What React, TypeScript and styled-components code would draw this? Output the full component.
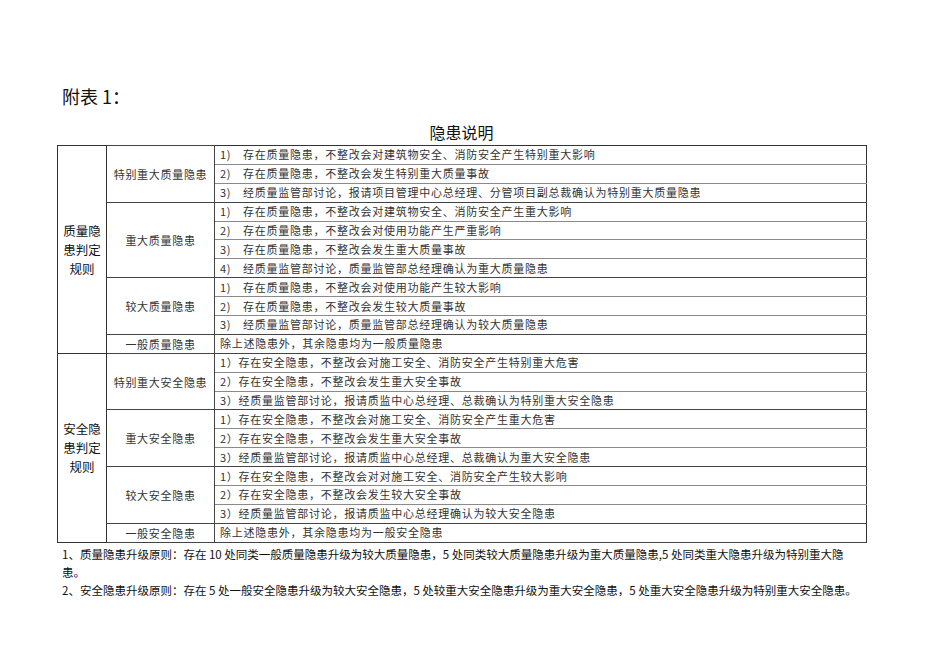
import styled, { createGlobalStyle } from 'styled-components'

const GlobalStyle = createGlobalStyle`
  html, body {
    margin: 0;
    padding: 0;
    background: #ffffff;
  }
  body {
    font-family: "Noto Sans CJK SC", "Noto Sans", sans-serif;
    color: #111111;
  }
`

const Page = styled.div`
  width: 950px;
  height: 672px;
  box-sizing: border-box;
  padding: 84px 0 0 57px;
`

const Heading = styled.div`
  font-size: 18px;
  line-height: 24px;
  padding-left: 5px;
  color: #111;
`

const Title = styled.div`
  width: 809px;
  text-align: center;
  font-size: 16px;
  line-height: 20px;
  margin-top: 14px;
  margin-bottom: 3px;
`

const Table = styled.table`
  width: 810px;
  border-collapse: collapse;
  table-layout: fixed;
  border: 1.5px solid #333;
`

const Row = styled.tr`
  height: 18.9px;
`

const GroupCell = styled.td`
  border: 1px solid #333;
  text-align: center;
  vertical-align: middle;
  font-size: 12.5px;
  line-height: 19px;
  padding: 0 4px;
  color: #111;
`

const LevelCell = styled.td`
  border: 1px solid #444;
  text-align: center;
  vertical-align: middle;
  font-size: 11px;
  letter-spacing: 0.7px;
  color: #333;
  padding: 0;
  white-space: nowrap;
`

const ItemCell = styled.td<{ $last?: boolean }>`
  border-left: 1px solid #444;
  border-right: 1px solid #333;
  border-bottom: 1px solid ${p => (p.$last ? '#444' : '#8a8a8a')};
  font-size: 11px;
  letter-spacing: 0.75px;
  line-height: 17px;
  color: #333;
  padding: 0 0 0 5px;
  white-space: nowrap;
  overflow: hidden;
`

const Notes = styled.div`
  width: 800px;
  font-size: 11.5px;
  line-height: 18px;
  padding: 2px 0 0 5px;
  box-sizing: border-box;
  color: #111;
`

type Level = { name: string; items: string[] }
type Group = { label: string[]; levels: Level[] }

const GROUPS: Group[] = [
  {
    label: ['质量隐', '患判定', '规则'],
    levels: [
      {
        name: '特别重大质量隐患',
        items: [
          '1)\u3000存在质量隐患，不整改会对建筑物安全、消防安全产生特别重大影响',
          '2)\u3000存在质量隐患，不整改会发生特别重大质量事故',
          '3)\u3000经质量监管部讨论，报请项目管理中心总经理、分管项目副总裁确认为特别重大质量隐患',
        ],
      },
      {
        name: '重大质量隐患',
        items: [
          '1)\u3000存在质量隐患，不整改会对建筑物安全、消防安全产生重大影响',
          '2)\u3000存在质量隐患，不整改会对使用功能产生严重影响',
          '3)\u3000存在质量隐患，不整改会发生重大质量事故',
          '4)\u3000经质量监管部讨论，质量监管部总经理确认为重大质量隐患',
        ],
      },
      {
        name: '较大质量隐患',
        items: [
          '1)\u3000存在质量隐患，不整改会对使用功能产生较大影响',
          '2)\u3000存在质量隐患，不整改会发生较大质量事故',
          '3)\u3000经质量监管部讨论，质量监管部总经理确认为较大质量隐患',
        ],
      },
      { name: '一般质量隐患', items: ['除上述隐患外，其余隐患均为一般质量隐患'] },
    ],
  },
  {
    label: ['安全隐', '患判定', '规则'],
    levels: [
      {
        name: '特别重大安全隐患',
        items: [
          '1）存在安全隐患，不整改会对施工安全、消防安全产生特别重大危害',
          '2）存在安全隐患，不整改会发生重大安全事故',
          '3）经质量监管部讨论，报请质监中心总经理、总裁确认为特别重大安全隐患',
        ],
      },
      {
        name: '重大安全隐患',
        items: [
          '1）存在安全隐患，不整改会对施工安全、消防安全产生重大危害',
          '2）存在安全隐患，不整改会发生重大安全事故',
          '3）经质量监管部讨论，报请质监中心总经理、总裁确认为重大安全隐患',
        ],
      },
      {
        name: '较大安全隐患',
        items: [
          '1）存在安全隐患，不整改会对对施工安全、消防安全产生较大影响',
          '2）存在安全隐患，不整改会发生较大安全事故',
          '3）经质量监管部讨论，报请质监中心总经理确认为较大安全隐患',
        ],
      },
      { name: '一般安全隐患', items: ['除上述隐患外，其余隐患均为一般安全隐患'] },
    ],
  },
]

const App = () => {
  const rows: JSX.Element[] = []
  GROUPS.forEach((group, gi) => {
    const total = group.levels.reduce((n, l) => n + l.items.length, 0)
    group.levels.forEach((level, li) => {
      level.items.forEach((item, ii) => {
        rows.push(
          <Row key={`${gi}-${li}-${ii}`}>
            {li === 0 && ii === 0 && (
              <GroupCell rowSpan={total}>
                {group.label.map(l => (
                  <div key={l}>{l}</div>
                ))}
              </GroupCell>
            )}
            {ii === 0 && <LevelCell rowSpan={level.items.length}>{level.name}</LevelCell>}
            <ItemCell $last={ii === level.items.length - 1}>{item}</ItemCell>
          </Row>
        )
      })
    })
  })

  return (
    <>
      <GlobalStyle />
      <Page>
        <Heading>附表 1：</Heading>
        <Title>隐患说明</Title>
        <Table>
          <colgroup>
            <col style={{ width: 49 }} />
            <col style={{ width: 108 }} />
            <col />
          </colgroup>
          <tbody>{rows}</tbody>
        </Table>
        <Notes>
          <div>
            1、质量隐患升级原则：存在 10 处同类一般质量隐患升级为较大质量隐患，5 处同类较大质量隐患升级为重大质量隐患,5 处同类重大隐患升级为特别重大隐患。
          </div>
          <div>
            2、安全隐患升级原则：存在 5 处一般安全隐患升级为较大安全隐患，5 处较重大安全隐患升级为重大安全隐患，5 处重大安全隐患升级为特别重大安全隐患。
          </div>
        </Notes>
      </Page>
    </>
  )
}

export default App
